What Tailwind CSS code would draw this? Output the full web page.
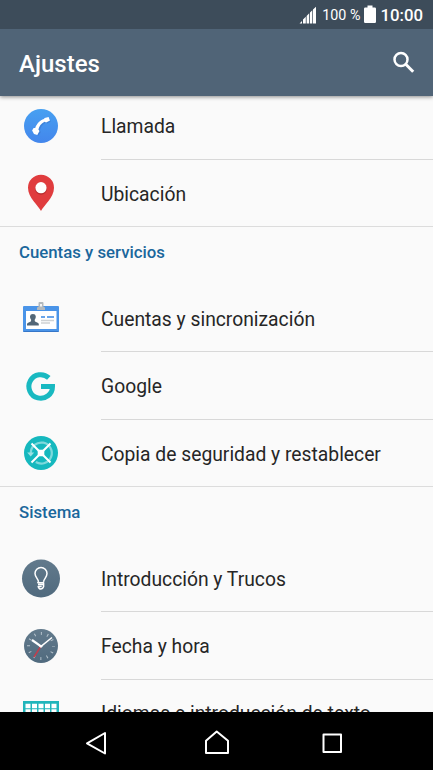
<!DOCTYPE html>
<html lang="es">
<head>
<meta charset="utf-8">
<title>Ajustes</title>
<script src="https://cdn.jsdelivr.net/npm/@tailwindcss/browser@4"></script>
</head>
<body class="bg-[#fafafa]">
<div class="flex h-[770px] w-[433px] flex-col overflow-hidden bg-[#fafafa] font-['Roboto',sans-serif] text-[#262626]">
  <header class="relative z-10 shrink-0 bg-[#506477] text-white shadow-[0_1px_4px_rgba(0,0,0,0.45)]">
    <div class="flex h-[29px] items-center justify-end bg-[#3d4c5a] pr-[10px]">
      <svg class="mr-[6px] h-[29px] w-[17px]" viewBox="300 0 17 29" fill="#fff">
        <path d="M300.500 23.500l2.500-2.500v2.500zM304 23.500v-4l2.800-2.800v6.800zM307.600 23.500v-7.600l2.600-2.600v10.200zM311 23.500v-11l2.300-2.300v13.300zM314 23.500v-14l3-2.700v16.700z"/>
      </svg>
      <span class="pt-[2px] text-[14.300px] leading-[29px]">100 %</span>
      <svg class="mr-[4px] ml-[4px] h-[29px] w-[12px]" viewBox="364 0 12 29" fill="#fff">
        <path d="M367.500 5.500h5v2h2.300q1.200 0 1.200 1.200v13q0 1.200-1.200 1.200h-9.600q-1.200 0-1.200-1.200v-13q0-1.200 1.200-1.200h2.300z"/>
      </svg>
      <span class="text-[16.800px] leading-[30px] font-medium">10:00</span>
    </div>
    <div class="flex h-[67px] items-center justify-between pr-[17px] pl-[19px]">
      <h1 class="pt-[2px] text-[24px] leading-[28px] font-medium">Ajustes</h1>
      <svg class="h-[67px] w-[24px]" viewBox="392 29 24 67" fill="none" stroke="#fff">
        <circle cx="401" cy="59.500" r="6.500" stroke-width="2.500"/>
        <path d="M405.500 64l7.700 7.700" stroke-width="3"/>
      </svg>
    </div>
  </header>

  <main class="min-h-0 flex-1 overflow-hidden text-[19.300px]">
    <section class="-mt-[4px] border-b border-[#dcdcdc]">
      <div class="flex h-[68px] pl-[19px]">
        <svg class="mr-[38px] h-[68px] w-[44px]" viewBox="19 92 44 68">
          <defs><linearGradient id="blue" x2="0" y2="1"><stop stop-color="#47a0f1"/><stop offset="1" stop-color="#4386ec"/></linearGradient></defs>
          <circle cx="41" cy="126" r="17" fill="url(#blue)"/>
          <path d="M45.200 118.200l3.500-1.200 1.400 3.400-3.600 1.900-1.500-.8c-3.200 1.500-5.200 4.600-5.900 7.800l1 1.500-2.300 3.600-2.800-1.200-1.400-3.600 1.700-2.600 1.100-.3c1.500-3.700 4-6.200 7.500-7.400z" fill="#2f65b8" opacity=".35" transform="translate(.7 1.200)"/>
          <path d="M44 119.100l.6-1.200 4-.9 1.400 3.600-3.900 1.800-1.600-.7c-3.400 1.500-5.400 4.500-6.100 7.900l1.100 1.500-2.200 4-3.300-1-1.900-3.600 1.500-2.400 1.600-.2c1.600-4 4.700-7.800 8.800-8.800z" fill="#fff"/>
        </svg>
        <div class="flex flex-1 items-center border-b border-[#d8d8d8] pt-[3px]">Llamada</div>
      </div>
      <div class="flex h-[66px] pl-[19px]">
        <svg class="mr-[38px] h-[66px] w-[44px]" viewBox="19 160 44 66">
          <path d="M41 211c-2.200-5-13-13-13-23.200a13 13 0 0 1 26 0c0 10.200-10.800 18.200-13 23.200z" fill="#e03c3e"/>
          <circle cx="41" cy="188.800" r="6" fill="#b92d2f"/>
          <circle cx="41" cy="187.700" r="5.600" fill="#fff"/>
        </svg>
        <div class="flex flex-1 items-center pt-[4px]">Ubicación</div>
      </div>
    </section>

    <section class="border-b border-[#dcdcdc]">
      <h2 class="h-[58px] pt-[14px] pl-[19px] text-[16.800px] leading-[22px] font-medium text-[#1a679c]">Cuentas y servicios</h2>
      <div class="flex h-[67px] pl-[19px]">
        <svg class="mr-[38px] h-[67px] w-[44px]" viewBox="19 285 44 67">
          <rect x="23" y="306" width="36" height="26" rx="1" fill="#4a94e8"/>
          <path d="M23.500 331.500h35" stroke="#3576c8"/>
          <rect x="26" y="311" width="30.500" height="18" fill="#fff"/>
          <path d="M37 308q0-1 1-1h.5v-4q0-1 1-1h3q1 0 1 1v4h.5q1 0 1 1v2h-8z" fill="#b3b9bd"/>
          <rect x="40" y="304" width="2" height="2.500" fill="#f5f5f5"/>
          <path d="M27 325.500v-1.700q.3-1.200 3.800-2.400l.4-1.400q-1.400-1.300-1.200-3.700.2-2.300 2.900-2.300t2.900 2.300q.2 2.400-1.200 3.700l.4 1.400q3.500 1.200 3.800 2.400v1.700z" fill="#526778"/>
          <path d="M41 317h4M47 317h7" stroke="#69a5ea" stroke-width="2"/>
          <path d="M41 320.500h13M41 323h9" stroke="#cfd2d4" stroke-width="1.400"/>
        </svg>
        <div class="flex flex-1 items-center border-b border-[#d8d8d8] pt-[4px]">Cuentas y sincronización</div>
      </div>
      <div class="flex h-[68px] pl-[19px]">
        <svg class="mr-[38px] h-[68px] w-[44px]" viewBox="19 352 44 68">
          <path d="M48.800 377.900a11.800 11.800 0 1 0 3.700 8.500h-11.500" fill="none" stroke="#19b9c1" stroke-width="5"/>
        </svg>
        <div class="flex flex-1 items-center border-b border-[#d8d8d8] pt-[3px]">Google</div>
      </div>
      <div class="flex h-[66px] pl-[19px]">
        <svg class="mr-[38px] h-[66px] w-[44px]" viewBox="19 420 44 66">
          <circle cx="41" cy="453" r="17" fill="#15b8be"/>
          <path d="M30.800 453a10.500 10.500 0 1 1 5 9" fill="none" stroke="#7ed9dc" stroke-width="2.300"/>
          <path d="M27.200 452.500h7l-3.500 4z" fill="#9be2e4"/>
          <path d="M31.500 443.500l19 19M50.500 443.500l-19 19" stroke="#fff" stroke-width="2"/>
          <rect x="37.700" y="449.700" width="6.600" height="6.600" rx="1" fill="#fff"/>
        </svg>
        <div class="flex flex-1 items-center pt-[4px]">Copia de seguridad y restablecer</div>
      </div>
    </section>

    <section>
      <h2 class="h-[58px] pt-[14px] pl-[19px] text-[16.800px] leading-[22px] font-medium text-[#1a679c]">Sistema</h2>
      <div class="flex h-[67px] pl-[19px]">
        <svg class="mr-[38px] h-[67px] w-[44px]" viewBox="19 545 44 67">
          <defs><linearGradient id="slate" x2="0" y2="1"><stop stop-color="#627a8c"/><stop offset="1" stop-color="#506a7e"/></linearGradient></defs>
          <circle cx="41" cy="578.500" r="19" fill="url(#slate)"/>
          <path d="M38.500 581.500c-.3-2.500-3.500-4.500-3.500-8a6 6 0 0 1 12 0c0 3.500-3.200 5.500-3.500 8.300M38.700 581.500l-.9 1.200h5.800v3.800q-.8 2.500-2.800 2.500t-2.600-2.500h3.500M38 584.500h5" fill="none" stroke="#fff" stroke-width="1.500" stroke-linejoin="round"/>
        </svg>
        <div class="flex flex-1 items-center border-b border-[#d8d8d8] pt-[4px]">Introducción y Trucos</div>
      </div>
      <div class="flex h-[68px] pl-[19px]">
        <svg class="mr-[38px] h-[68px] w-[44px]" viewBox="19 612 44 68">
          <circle cx="41" cy="646" r="17" fill="url(#slate)"/>
          <circle cx="41" cy="646" r="12.500" fill="none" stroke="#b5c2cc" stroke-width="3" stroke-dasharray="1 5.545" stroke-dashoffset=".5"/>
          <path d="M41 646l-7 11" stroke="#c23d4c" stroke-width="1.500"/>
          <path d="M32 640l9 6.300" stroke="#fff" stroke-width="2.200"/>
          <path d="M41 646.300l11-8.800" stroke="#fff" stroke-width="1.500"/>
          <circle cx="41" cy="646.300" r="1.400" fill="#fff"/>
        </svg>
        <div class="flex flex-1 items-center border-b border-[#d8d8d8] pt-[3px]">Fecha y hora</div>
      </div>
      <div class="flex h-[67px] pl-[19px]">
        <svg class="mr-[38px] h-[67px] w-[44px]" viewBox="19 680 44 67">
          <rect x="23" y="701" width="36" height="26" fill="#20b5bb"/>
          <path d="M25.500 706h31M25.500 711.500h31M25.500 717h31" stroke="#fff" stroke-width="4.500" stroke-dasharray="5 1.500"/>
        </svg>
        <div class="flex flex-1 items-center pt-[2px]">Idiomas e introducción de texto</div>
      </div>
    </section>
  </main>

  <nav class="h-[58px] shrink-0 bg-black">
    <svg class="h-[58px] w-[433px]" viewBox="0 712 433 58" fill="none" stroke="#fff" stroke-width="2" stroke-linejoin="round">
      <path d="M105 733v20.500l-18-10.200z"/>
      <path d="M206 753v-12.300l10.700-9.200 11.300 9.200v12.300z"/>
      <path d="M323.500 734.500h17.500v17.500h-17.500z"/>
    </svg>
  </nav>
</div>
</body>
</html>
